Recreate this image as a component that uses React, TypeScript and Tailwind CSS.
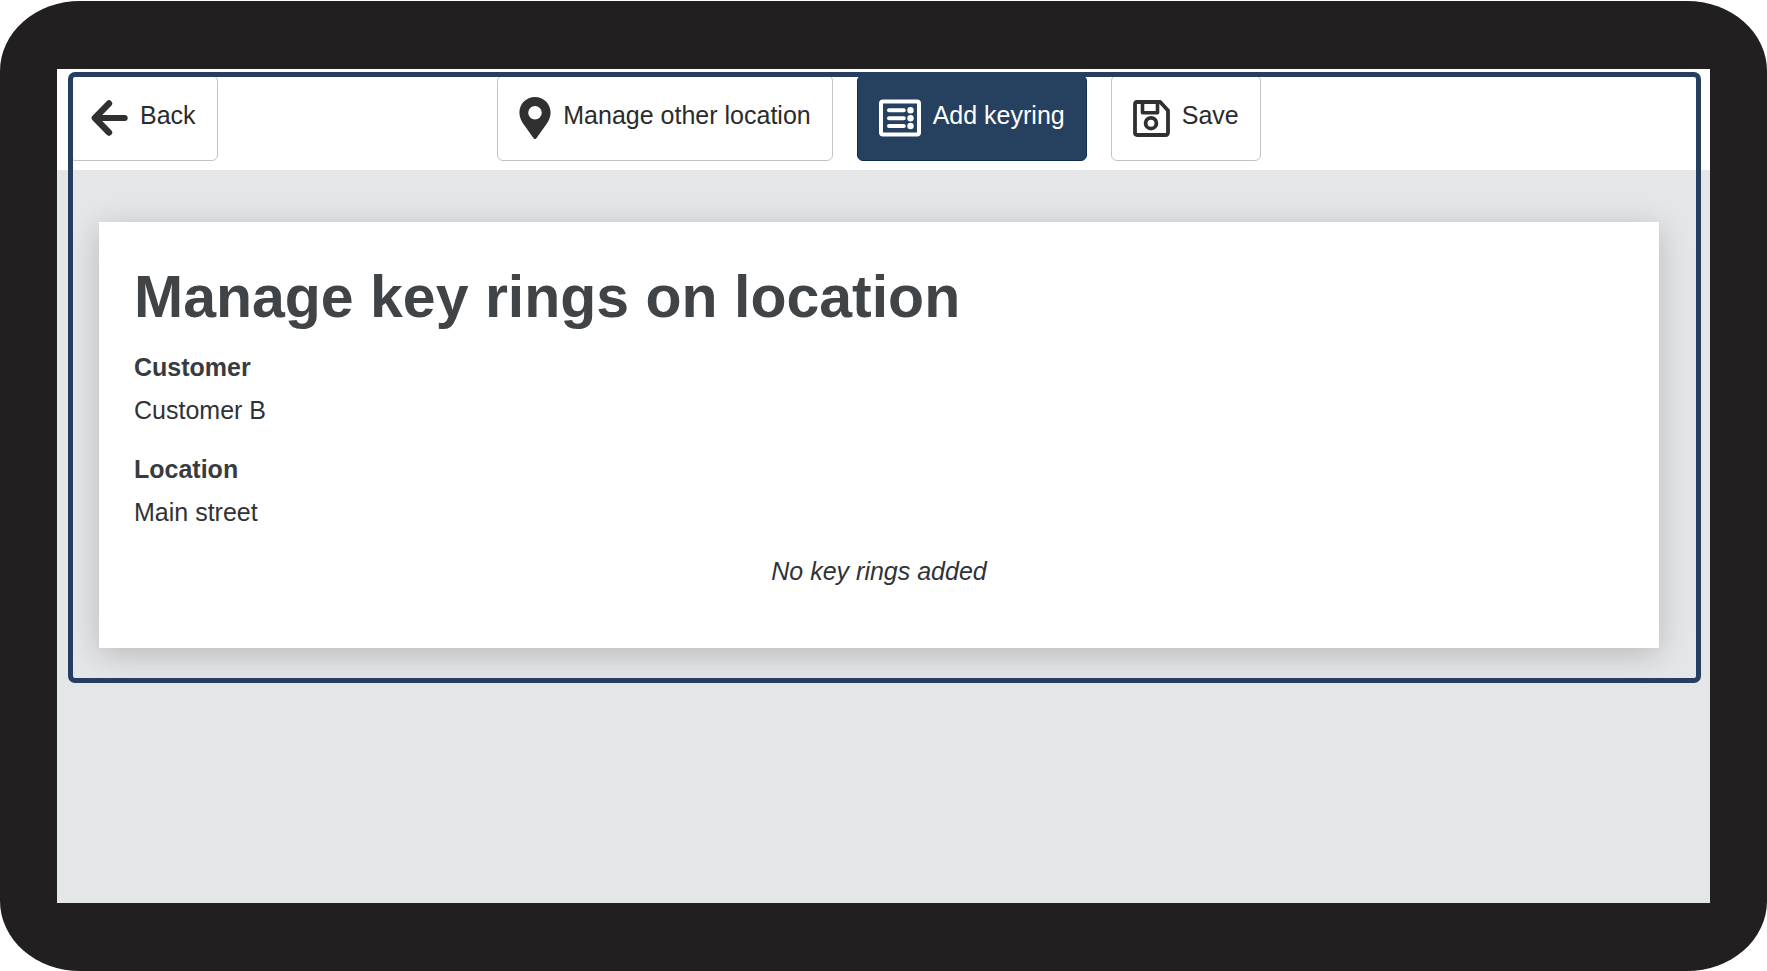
import type { ReactNode } from "react";

function ArrowIcon() {
  return (
    <svg width="37" height="36" viewBox="0 0 37 36" fill="none" stroke="#303030" strokeLinecap="round" strokeLinejoin="round" aria-hidden="true">
      <path d="M18 3.500 3.800 18 18 32.500" strokeWidth="6.400" />
      <path d="M6 18h27.700" strokeWidth="6" />
      <path d="M5 18 9 14v8Z" fill="#303030" strokeWidth="2" />
    </svg>
  );
}

function PinIcon() {
  return (
    <svg width="32" height="42" viewBox="0 0 32 42" aria-hidden="true">
      <path
        fill="#303030"
        fillRule="evenodd"
        d="M16 0C7.200 0 .4 6.900 .4 15.700c0 4.700 2 8.300 4.400 11.800l9.800 13.800c.7 1 2.100 1 2.800 0l9.800-13.800c2.400-3.500 4.400-7.100 4.400-11.800C31.600 6.900 24.800 0 16 0Zm0 8.900a6.800 6.800 0 1 1 0 13.600 6.800 6.800 0 0 1 0-13.600Z"
      />
    </svg>
  );
}

function ListIcon() {
  return (
    <svg width="42" height="38" viewBox="0 0 42 38" fill="none" stroke="#fff" aria-hidden="true">
      <rect x="2" y="2.500" width="38" height="33" rx="2" strokeWidth="4" />
      <path d="M10 11.300h14.800M10 19.200h14.800M10 27h14.800" strokeWidth="4" strokeLinecap="round" />
      <g fill="#fff" stroke="none">
        <circle cx="31.500" cy="11.300" r="3.200" />
        <circle cx="31.500" cy="19.200" r="3.200" />
        <circle cx="31.500" cy="27" r="3.200" />
      </g>
    </svg>
  );
}

function SaveIcon() {
  return (
    <svg width="37" height="37" viewBox="0 0 37 37" fill="none" stroke="#303030" strokeWidth="3.800" strokeLinejoin="round" aria-hidden="true">
      <path d="M4.200 2h23l7.800 8.500v22.200a2.300 2.300 0 0 1-2.300 2.300H4.200A2.300 2.300 0 0 1 2 32.700V4.300A2.300 2.300 0 0 1 4.200 2Z" />
      <path d="M9.500 2v10.800h15V2" strokeWidth="3.600" />
      <circle cx="18" cy="23.200" r="5.400" />
    </svg>
  );
}

function ToolbarButton({ icon, label, primary = false }: { icon: ReactNode; label: string; primary?: boolean }) {
  return (
    <button
      type="button"
      className={
        primary
          ? "flex h-[86px] items-center gap-3 rounded-md border border-[#122c4d] bg-[#26405f] px-[21px] text-[25px] leading-7 whitespace-nowrap text-white"
          : "flex h-[86px] items-center gap-3 rounded-md border border-[#c2c2c2] bg-white px-[21px] text-[25px] leading-7 whitespace-nowrap text-[#2b2b2b]"
      }
    >
      {icon}
      <span className="pb-1.5">{label}</span>
    </button>
  );
}

export default function App() {
  return (
    <div className="flex min-h-screen flex-col bg-white pt-px font-['Liberation_Sans',Arial,sans-serif]">
      <div className="flex grow flex-col rounded-[80px/70px] bg-[#221f20] px-[57px] py-[68px]">
        <div className="grow bg-[#e5e6e8]">
          <div className="relative">
            <header className="grid grid-cols-[1fr_auto_1fr] bg-white pt-[6px] pr-[9px] pb-[9px]">
              <div className="flex pl-3">
                <ToolbarButton icon={<ArrowIcon />} label="Back" />
              </div>
              <div className="flex gap-6">
                <ToolbarButton icon={<PinIcon />} label="Manage other location" />
                <ToolbarButton icon={<ListIcon />} label="Add keyring" primary />
                <ToolbarButton icon={<SaveIcon />} label="Save" />
              </div>
            </header>
            <main className="pt-[52px] pr-[51px] pb-[35px] pl-[42px]">
              <section className="bg-white px-[35px] pt-[39px] pb-[55px] text-[25px] leading-[43px] text-[#303336] shadow-[0_6px_30px_rgba(0,0,0,0.2)]">
                <h1 className="mb-[13px] text-[59px] leading-[72px] font-bold text-[#414447]">Manage key rings on location</h1>
                <dl>
                  <dt className="font-bold text-[#393c3f]">Customer</dt>
                  <dd className="mb-4">Customer B</dd>
                  <dt className="font-bold text-[#393c3f]">Location</dt>
                  <dd className="mb-4">Main street</dd>
                </dl>
                <p className="text-center italic">No key rings added</p>
              </section>
            </main>
            <div className="pointer-events-none absolute top-[3px] right-[9px] bottom-0 left-[11px] rounded-[7px] border-5 border-[#263f60]" />
          </div>
        </div>
      </div>
    </div>
  );
}
